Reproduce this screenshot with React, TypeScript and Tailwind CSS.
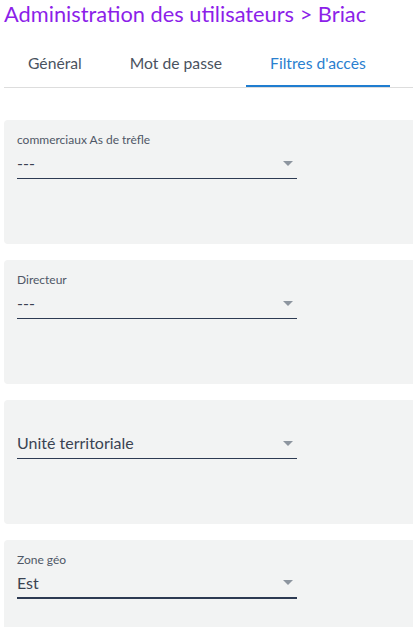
import React from "react";

type Filter = {
  label?: string;
  value: string;
  focused?: boolean;
};

const filters: Filter[] = [
  { label: "commerciaux As de trèfle", value: "---" },
  { label: "Directeur", value: "---" },
  { value: "Unité territoriale" },
  { label: "Zone géo", value: "Est", focused: true },
];

const tabs = ["Général", "Mot de passe", "Filtres d'accès"];

function Arrow() {
  return (
    <svg width="10" height="5" viewBox="0 0 10 5" className="mr-1">
      <path d="M0 0h10L5 5z" fill="#8d959f" />
    </svg>
  );
}

function FilterCard({ filter }: { filter: Filter }) {
  return (
    <div className="h-[124px] w-[420px] shrink-0 rounded bg-[#f2f3f3] pl-[13px] pt-3">
      <div className="h-4 text-[12px] leading-4 text-[#4f5766]">{filter.label}</div>
      <div
        className={
          "flex h-[31px] w-[280px] items-center justify-between border-[#2d3a52] " +
          (filter.focused ? "border-b-2" : "border-b")
        }
      >
        <span className="text-[16px] text-[#3a4352]">{filter.value}</span>
        <Arrow />
      </div>
    </div>
  );
}

export default function App() {
  return (
    <div className="h-[627px] w-[413px] overflow-hidden bg-white pl-1 pt-px font-['Lato',sans-serif]">
      <h1 className="text-[21.8px] leading-[25px] text-[#8c1fe9]">
        Administration des utilisateurs &gt; Briac
      </h1>
      <div className="mt-[16px] flex border-b border-[#dddddd]">
        {tabs.map((tab, i) => (
          <div
            key={tab}
            className={
              "px-6 pt-[10px] pb-[11px] text-[15.7px] leading-[22px] " +
              (i === 2
                ? "border-b-2 border-[#1f7dd0] text-[#2a80cf]"
                : "border-b-2 border-transparent text-[#4a5260]")
            }
          >
            {tab}
          </div>
        ))}
      </div>
      <div className="mt-8 flex flex-col gap-4">
        {filters.map((f, i) => (
          <FilterCard key={i} filter={f} />
        ))}
      </div>
    </div>
  );
}
